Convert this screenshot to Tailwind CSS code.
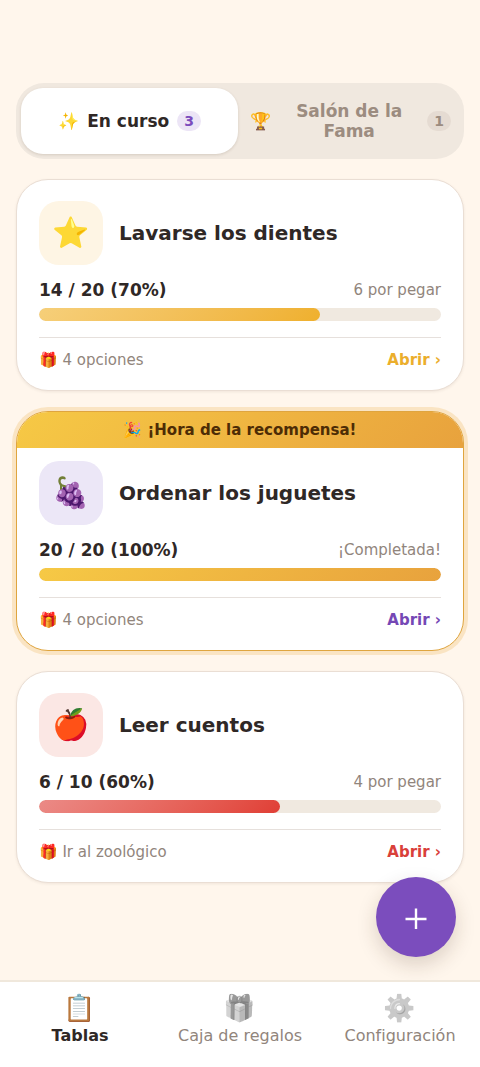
<!DOCTYPE html>
<html lang="es">
<head>
<meta charset="UTF-8">
<meta name="viewport" content="width=device-width, initial-scale=1.0">
<title>Tablas de recompensas</title>
<script src="https://cdn.jsdelivr.net/npm/@tailwindcss/browser@4"></script>
</head>
<body class="min-h-screen bg-[#fff6ec] pb-24 font-['DejaVu_Sans','Noto_Color_Emoji',sans-serif] text-[#2f2826]">

<main class="px-4 pt-[83px]">
  <!-- Tabs -->
  <div role="tablist" class="flex gap-1 rounded-[28px] bg-[#f0e8df] p-[5px]">
    <button role="tab" aria-selected="true" class="flex min-h-[66px] flex-1 items-center justify-center gap-2 rounded-[22px] bg-white px-2 text-[17px] leading-5 font-bold shadow-[0_1px_3px_rgba(60,40,20,0.15)]">
      <span>✨</span>
      <span>En curso</span>
      <span class="rounded-full bg-[#ece5f6] px-[7px] text-sm leading-5 text-[#7b4dbd]">3</span>
    </button>
    <button role="tab" aria-selected="false" class="flex min-h-[66px] flex-1 items-center justify-center gap-2 rounded-[22px] px-2 text-[17px] leading-5 font-bold text-[#9c8c80]">
      <span>🏆</span>
      <span>Salón de la Fama</span>
      <span class="rounded-full bg-[#e5dbd2] px-[7px] text-sm leading-5">1</span>
    </button>
  </div>

  <div class="mt-5 flex flex-col gap-5">
    <!-- Lavarse los dientes -->
    <article class="rounded-[32px] border border-[#eaded4] bg-white px-[22px] pt-[21px] pb-5 shadow-[0_1px_3px_rgba(60,40,20,0.08)]">
      <div class="flex items-center gap-4">
        <div class="flex size-16 items-center justify-center rounded-[20px] bg-[#fef5e4] text-[30px] leading-none">⭐</div>
        <h2 class="text-xl font-bold">Lavarse los dientes</h2>
      </div>
      <div class="mt-[13px] flex items-center justify-between">
        <span class="text-[17px] leading-6 font-bold">14 / 20 (70%)</span>
        <span class="text-[15px] leading-5 text-[#91857c]">6 por pegar</span>
      </div>
      <div class="mt-[6px] h-[13px] overflow-hidden rounded-full bg-[#f0e9e0]">
        <div class="h-full rounded-full bg-linear-135 from-[#f6cf79] to-[#efb02d]" style="width: 70%"></div>
      </div>
      <div class="mt-4 flex items-center justify-between border-t border-[#e6e0dc] pt-3 text-[15px] leading-5">
        <span class="text-[#91857c]">🎁 4 opciones</span>
        <a href="#" class="font-bold text-[#ebae2c]">Abrir ›</a>
      </div>
    </article>

    <!-- Ordenar los juguetes -->
    <article class="overflow-hidden rounded-[32px] border border-[#dfa53f] bg-white shadow-[0_0_0_4px_#fae4c3]">
      <div class="bg-linear-135 from-[#f6c945] to-[#e8a23d] py-2 text-center text-[15px] leading-5 font-bold text-[#4d2c05]">🎉 ¡Hora de la recompensa!</div>
      <div class="px-[22px] pt-[13px] pb-5">
        <div class="flex items-center gap-4">
          <div class="flex size-16 items-center justify-center rounded-[20px] bg-[#ece7f7] text-[30px] leading-none">🍇</div>
          <h2 class="text-xl font-bold">Ordenar los juguetes</h2>
        </div>
        <div class="mt-[13px] flex items-center justify-between">
          <span class="text-[17px] leading-6 font-bold">20 / 20 (100%)</span>
          <span class="text-[15px] leading-5 text-[#91857c]">¡Completada!</span>
        </div>
        <div class="mt-[6px] h-[13px] overflow-hidden rounded-full bg-[#f0e9e0]">
          <div class="h-full rounded-full bg-linear-135 from-[#f6c945] to-[#e8a23d]" style="width: 100%"></div>
        </div>
        <div class="mt-4 flex items-center justify-between border-t border-[#e6e0dc] pt-3 text-[15px] leading-5">
          <span class="text-[#91857c]">🎁 4 opciones</span>
          <a href="#" class="font-bold text-[#7548b5]">Abrir ›</a>
        </div>
      </div>
    </article>

    <!-- Leer cuentos -->
    <article class="rounded-[32px] border border-[#eaded4] bg-white px-[22px] pt-[21px] pb-5 shadow-[0_1px_3px_rgba(60,40,20,0.08)]">
      <div class="flex items-center gap-4">
        <div class="flex size-16 items-center justify-center rounded-[20px] bg-[#fbe7e4] text-[30px] leading-none">🍎</div>
        <h2 class="text-xl font-bold">Leer cuentos</h2>
      </div>
      <div class="mt-[13px] flex items-center justify-between">
        <span class="text-[17px] leading-6 font-bold">6 / 10 (60%)</span>
        <span class="text-[15px] leading-5 text-[#91857c]">4 por pegar</span>
      </div>
      <div class="mt-[6px] h-[13px] overflow-hidden rounded-full bg-[#f0e9e0]">
        <div class="h-full rounded-full bg-linear-135 from-[#eb8a86] to-[#e03e35]" style="width: 60%"></div>
      </div>
      <div class="mt-4 flex items-center justify-between border-t border-[#e6e0dc] pt-3 text-[15px] leading-5">
        <span class="text-[#91857c]">🎁 Ir al zoológico</span>
        <a href="#" class="font-bold text-[#d9403a]">Abrir ›</a>
      </div>
    </article>
  </div>
</main>

<!-- Add button -->
<button aria-label="Añadir tabla" class="fixed right-6 bottom-[110px] flex size-20 items-center justify-center rounded-full bg-[#7b4dbd] text-white shadow-[0_8px_20px_rgba(60,40,20,0.18)]">
  <svg class="size-6" viewBox="0 0 24 24" fill="none" stroke="currentColor" stroke-width="2.4"><path d="M12 3.5v20.5M1.5 14h21"/></svg>
</button>

<!-- Bottom navigation -->
<nav class="fixed inset-x-0 bottom-0 grid h-[87px] grid-cols-3 border-t-2 border-[#f0e8dc] bg-white text-base">
  <a href="#" aria-current="page" class="flex flex-col items-center pt-2 font-bold">
    <span class="text-[26px] leading-9">📋</span>
    <span class="leading-5">Tablas</span>
  </a>
  <a href="#" class="flex flex-col items-center pt-2 text-[#91857c]">
    <span class="text-[26px] leading-9 opacity-60 grayscale">🎁</span>
    <span class="leading-5">Caja de regalos</span>
  </a>
  <a href="#" class="flex flex-col items-center pt-2 text-[#91857c]">
    <span class="text-[26px] leading-9 opacity-60 grayscale">⚙️</span>
    <span class="leading-5">Configuración</span>
  </a>
</nav>

</body>
</html>
